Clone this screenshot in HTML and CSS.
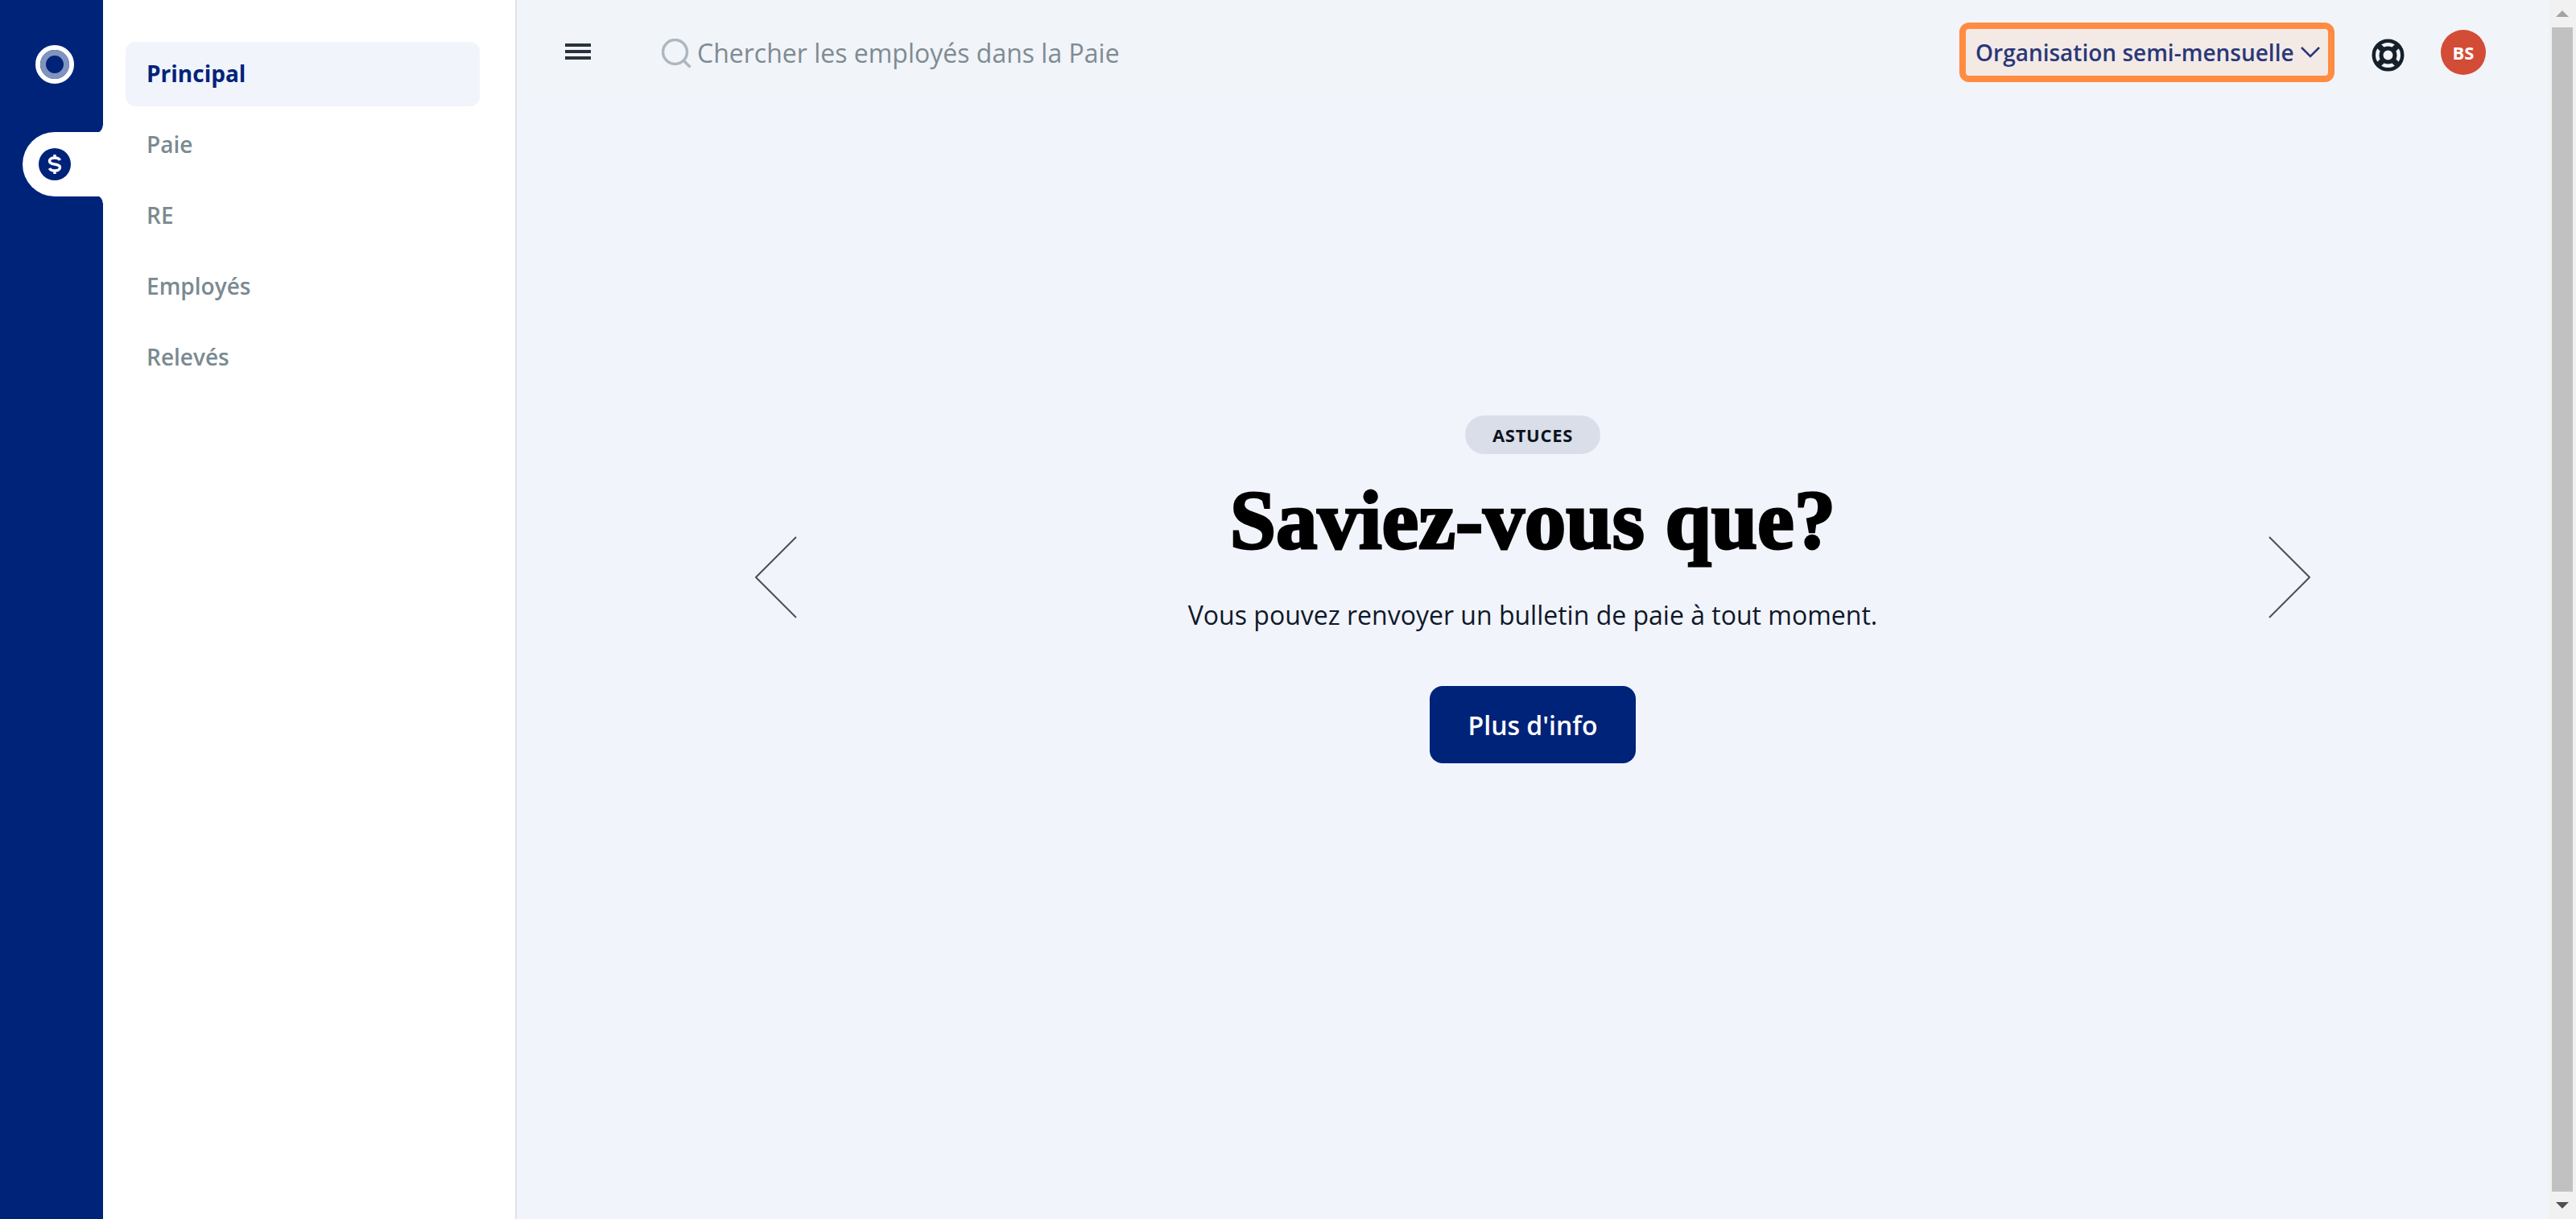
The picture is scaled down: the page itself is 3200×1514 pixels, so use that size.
FILE: index.html
```html
<!DOCTYPE html>
<html lang="fr">
<head>
    <meta charset="UTF-8">
    <title>Paie - Principal</title>
    <link rel="stylesheet" href="styles.css">
</head>
<body>
    <div class="app">
        <aside class="rail">
            <div class="rail-logo">
                <svg width="48" height="48" viewBox="0 0 48 48"><circle cx="24" cy="24" r="21" fill="none" stroke="#fff" stroke-width="6"/><circle cx="24" cy="24" r="14.5" fill="none" stroke="#8094c0" stroke-width="7"/></svg>
            </div>
            <div class="rail-tab">
                <svg width="40" height="40" viewBox="0 0 40 40"><circle cx="20" cy="20" r="20" fill="#00237a"/><path d="M26.500 15c-1-2-3-3-6.500-3-3.800 0-6.500 1.600-6.500 4s2.700 3.500 6.500 4 6.500 1.600 6.500 4-2.700 4-6.500 4c-3.500 0-5.500-1-6.500-3M20 8v4M20 28v4" fill="none" stroke="#fff" stroke-width="3.500"/></svg>
            </div>
        </aside>
        <nav class="sidebar">
            <a class="side-item active">Principal</a>
            <a class="side-item">Paie</a>
            <a class="side-item">RE</a>
            <a class="side-item">Employés</a>
            <a class="side-item">Relevés</a>
        </nav>
        <main class="main">
            <header class="topbar">
                <div class="burger"><span></span><span></span><span></span></div>
                <div class="search">
                    <svg width="37" height="36" viewBox="0 0 37 36"><circle cx="16.500" cy="16.500" r="15" fill="none" stroke="#adb7bf" stroke-width="3.500"/><path d="M27.500 27.500l8 8" stroke="#adb7bf" stroke-width="3.500"/></svg>
                    <span>Chercher les employés dans la Paie</span>
                </div>
                <button class="org-btn">
                    Organisation semi-mensuelle
                    <svg width="24" height="14" viewBox="0 0 24 14"><path d="M1 1l11 11L23 1" fill="none" stroke="#2a3878" stroke-width="2.500"/></svg>
                </button>
                <svg class="help-icon" width="41" height="41" viewBox="0 0 41 41"><circle cx="20.500" cy="20.500" r="17.750" fill="none" stroke="#16202a" stroke-width="4.500"/><circle cx="20.500" cy="20.500" r="8.500" fill="none" stroke="#16202a" stroke-width="5"/><path d="M8 8l7 7M33 8l-7 7M8 33l7-7M33 33l-7-7" stroke="#16202a" stroke-width="7"/></svg>
                <div class="avatar">BS</div>
            </header>
            <section class="carousel">
                <svg class="arrow" width="52" height="102" viewBox="0 0 52 102"><path d="M51 1L1 51l50 50" fill="none" stroke="#4a4f5a" stroke-width="2"/></svg>
                <div class="tip">
                    <span class="tip-tag">ASTUCES</span>
                    <h1>Saviez-vous que?</h1>
                    <p>Vous pouvez renvoyer un bulletin de paie à tout moment.</p>
                    <button class="tip-btn">Plus d'info</button>
                </div>
                <svg class="arrow" width="52" height="102" viewBox="0 0 52 102"><path d="M1 1l50 50L1 101" fill="none" stroke="#4a4f5a" stroke-width="2"/></svg>
            </section>
        </main>
        <div class="scrollbar">
            <div class="scroll-arrow"><i class="tri-up"></i></div>
            <div class="scroll-thumb"></div>
            <div class="scroll-arrow"><i class="tri-down"></i></div>
        </div>
    </div>
</body>
</html>
```

FILE: styles.css
```css
* { box-sizing: border-box; }
html, body { height: 100%; }
body { margin: 0; font-family: "Open Sans", Arial, sans-serif; background: #f1f4fb; overflow: hidden; }
.app { display: flex; height: 100%; }

.rail { width: 128px; flex: none; background: #00237a; padding: 56px 0 0 28px; }
.rail-logo { width: 80px; height: 48px; display: flex; justify-content: center; margin-bottom: 60px; }
.rail-tab { position: relative; height: 80px; background: #fff; border-radius: 40px 0 0 40px; display: flex; align-items: center; padding-left: 20px; }
.rail-tab::before, .rail-tab::after { content: ""; position: absolute; right: 0; width: 10px; height: 8px; }
.rail-tab::before { top: -8px; background: radial-gradient(circle at 0 0, #00237a 9px, #fff 10px); }
.rail-tab::after { bottom: -8px; background: radial-gradient(circle at 0 100%, #00237a 9px, #fff 10px); }

.sidebar { width: 514px; flex: none; background: #fff; border-right: 2px solid #dfe2e8; padding: 52px 44px 0 28px; display: flex; flex-direction: column; gap: 8px; }
.side-item { height: 80px; display: flex; align-items: center; padding: 0 0 2px 26px; border-radius: 12px; font-size: 28px; font-weight: 600; color: #7a8a91; }
.side-item.active { background: #f1f4fb; color: #00237a; font-weight: 700; }

.main { flex: 1; min-width: 0; display: flex; flex-direction: column; }
.topbar { height: 130px; flex: none; display: flex; align-items: flex-start; padding: 28px 78px 0 60px; background: #f1f4f9; }
.burger { width: 32px; margin-top: 26px; display: flex; flex-direction: column; gap: 4px; }
.burger span { height: 4px; background: #2a333c; }
.search { display: flex; align-items: center; gap: 7px; margin-left: 88px; margin-top: 16px; font-size: 32px; color: #7f8b92; flex: 1; }
.org-btn { height: 74px; width: 466px; display: flex; align-items: center; justify-content: space-between; padding: 0 10px 0 12px; border: 8px solid #ff8c42; border-radius: 12px; background: #f3eae6; color: #2a3878; font-family: inherit; font-size: 28px; font-weight: 600; }
.help-icon { margin-left: 46px; margin-top: 20px; flex: none; }
.avatar { width: 56px; height: 56px; margin-left: 45px; margin-top: 9px; border-radius: 50%; background: #d34c36; color: #fff; font-size: 22px; font-weight: 700; display: flex; align-items: center; justify-content: center; flex: none; }

.carousel { display: flex; justify-content: space-between; margin: 0 296px; padding-top: 386px; }
.arrow { margin-top: 150px; flex: none; }
.tip { display: flex; flex-direction: column; align-items: center; }
.tip-tag { height: 48px; width: 168px; border-radius: 24px; background: #d9dee9; color: #0d1420; font-size: 22px; font-weight: 700; letter-spacing: 0.700px; display: flex; align-items: center; justify-content: center; }
.tip h1 { margin: 22px 0 0; font-family: "Liberation Serif", serif; font-size: 103px; line-height: 120px; font-weight: 700; color: #000; -webkit-text-stroke: 3px #000; }
.tip p { margin: 36px 0 0; font-size: 32px; line-height: 44px; color: #10182a; }
.tip-btn { margin-top: 66px; width: 256px; height: 96px; border: none; border-radius: 16px; background: #00237a; color: #fff; font-family: inherit; font-size: 32px; font-weight: 600; }

.scrollbar { width: 34px; flex: none; background: #f1f1f1; display: flex; flex-direction: column; }
.scroll-arrow { height: 34px; flex: none; display: flex; align-items: center; justify-content: center; }
.scroll-thumb { flex: 1; margin: 0 4px 0 4px; background: #c1c1c1; }
.tri-up { border: 8px solid transparent; border-top: none; border-bottom: 8px solid #a3a3a3; }
.tri-down { border: 8px solid transparent; border-bottom: none; border-top: 8px solid #505050; }
```
